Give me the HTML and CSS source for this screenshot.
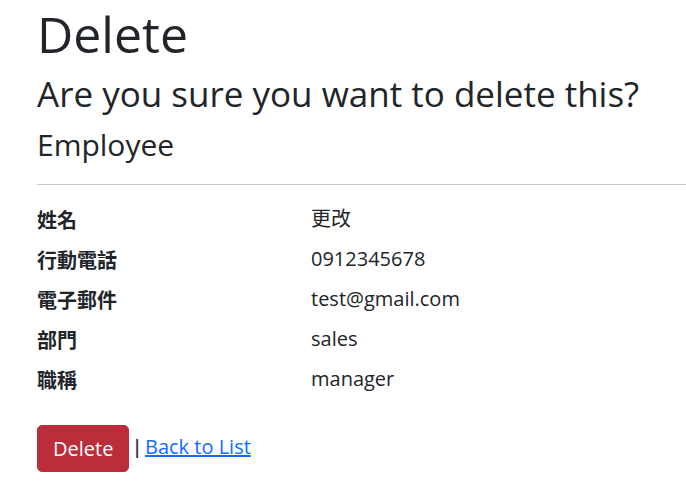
FILE: index.html
```html
<!DOCTYPE html>
<html lang="zh-Hant">
<head>
<meta charset="utf-8">
<title>Delete</title>
<link rel="stylesheet" href="styles.css">
</head>
<body>
<main class="page">
  <h1 class="title">Delete</h1>
  <h3 class="question">Are you sure you want to delete this?</h3>
  <div class="record">
    <h4 class="entity">Employee</h4>
    <hr class="rule">
    <dl class="details">
      <dt class="label">姓名</dt>
      <dd class="value">更改</dd>
      <dt class="label">行動電話</dt>
      <dd class="value">0912345678</dd>
      <dt class="label">電子郵件</dt>
      <dd class="value">test@gmail.com</dd>
      <dt class="label">部門</dt>
      <dd class="value">sales</dd>
      <dt class="label">職稱</dt>
      <dd class="value">manager</dd>
    </dl>
    <form class="actions">
      <button type="button" class="btn-danger">Delete</button> <span class="sep">|</span> <a class="back-link" href="#">Back to List</a>
    </form>
  </div>
</main>
</body>
</html>
```

FILE: styles.css
```css
html, body {
  margin: 0;
  padding: 0;
  background: #ffffff;
}

body {
  font-family: "Open Sans", "Noto Sans CJK TC", sans-serif;
  font-size: 20px;
  line-height: 30px;
  color: #212529;
}

.page {
  padding: 4px 0 0 37px;
}

.title,
.question,
.entity {
  font-weight: 400;
  margin: 0;
}

.title {
  font-size: 50px;
  line-height: 60px;
  margin-bottom: 9px;
}

.question {
  font-size: 35px;
  line-height: 42px;
  margin-bottom: 12px;
}

.entity {
  font-size: 30px;
  line-height: 36px;
}

.rule {
  margin: 21px 0 19px 0;
  border: 0;
  border-top: 1px solid #cbcbcc;
  height: 0;
}

.details {
  display: grid;
  grid-template-columns: 274px 1fr;
  margin: 0 0 21px 0;
}

.label {
  font-weight: 700;
  margin: 0 0 9px 0;
  padding-top: 1px;
  font-family: "Noto Sans CJK TC", "Open Sans", sans-serif;
}

.value {
  margin: 0 0 10px 0;
}

.actions {
  margin: 0;
}

.btn-danger {
  font-family: inherit;
  font-size: 20px;
  line-height: 30px;
  color: #ffffff;
  background: #bb2d3b;
  border: 1px solid #bb2d3b;
  border-radius: 5px;
  padding: 7.5px 15px;
  vertical-align: middle;
  cursor: pointer;
}

.sep {
  font-family: "Liberation Sans", sans-serif;
  color: #212529;
}

.back-link {
  color: #0d6efd;
  text-decoration: underline;
}
```
